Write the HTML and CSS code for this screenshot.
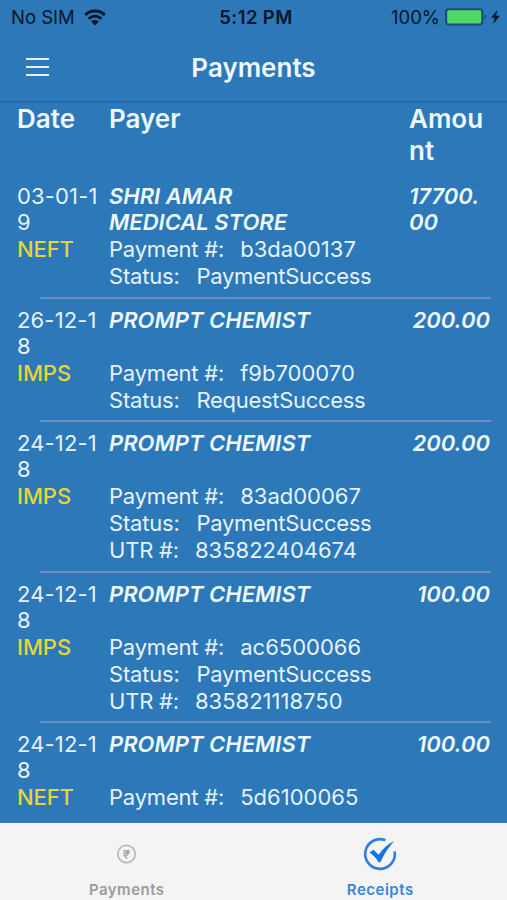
FILE: index.html
```html
<!DOCTYPE html>
<html lang="en">
<head>
    <meta charset="UTF-8">
    <meta name="viewport" content="width=device-width, initial-scale=1.0">
    <title>Payments</title>
    <link rel="stylesheet" href="styles.css">
</head>
<body>
    <div class="status-bar">
        <div class="carrier">
            <span>No SIM</span>
            <svg class="wifi" viewBox="0 0 22 17" width="22" height="17">
                <path d="M1.2 6C6.7 .8 15.3 .8 20.8 6" fill="none" stroke="#06152a" stroke-width="3"/>
                <path d="M4.6 9.8C8.5 6.3 13.5 6.3 17.4 9.8" fill="none" stroke="#06152a" stroke-width="2.8"/>
                <path d="M7.2 12.6C9.4 10.6 12.6 10.6 14.8 12.6L11 16.4Z" fill="#06152a"/>
            </svg>
        </div>
        <span class="clock">5:12 PM</span>
        <div class="battery">
            <span>100%</span>
            <svg viewBox="0 0 56 18" width="56" height="18">
                <rect x="0" y="0.2" width="38.4" height="17.4" rx="4" fill="#174f7d"/>
                <rect x="2.2" y="2.2" width="34" height="13.4" rx="1.5" fill="#4fd964"/>
                <path d="M39.6 6.5c2 1 2 4 0 5z" fill="#174f7d"/>
                <path d="M52.4 2L46 9.8H49.6L48 16L55 7.8H51Z" fill="#06152a"/>
            </svg>
        </div>
    </div>

    <header>
        <svg class="menu" viewBox="0 0 23 19" width="23" height="19">
            <path d="M0 1H23M0 9H23M0 17H23" stroke="#e4f2fd" stroke-width="1.9"/>
        </svg>
        <h1>Payments</h1>
    </header>

    <main>
        <div class="heading">
            <span>Date</span>
            <span>Payer</span>
            <span class="heading-amount">Amount</span>
        </div>

        <section class="payment">
            <div class="date">03-01-19</div>
            <div class="payer">SHRI AMAR MEDICAL STORE</div>
            <div class="amount wrapped">17700.<br>00</div>
            <div class="mode">NEFT</div>
            <div class="details">
                <p><span>Payment #:</span><span class="number">b3da00137</span></p>
                <p><span>Status:</span><span class="status">PaymentSuccess</span></p>
            </div>
        </section>

        <section class="payment">
            <div class="date">26-12-18</div>
            <div class="payer">PROMPT CHEMIST</div>
            <div class="amount">200.00</div>
            <div class="mode">IMPS</div>
            <div class="details">
                <p><span>Payment #:</span><span class="number">f9b700070</span></p>
                <p><span>Status:</span><span class="status">RequestSuccess</span></p>
            </div>
        </section>

        <section class="payment">
            <div class="date">24-12-18</div>
            <div class="payer">PROMPT CHEMIST</div>
            <div class="amount">200.00</div>
            <div class="mode">IMPS</div>
            <div class="details">
                <p><span>Payment #:</span><span class="number">83ad00067</span></p>
                <p><span>Status:</span><span class="status">PaymentSuccess</span></p>
                <p><span>UTR #:</span><span class="number">835822404674</span></p>
            </div>
        </section>

        <section class="payment">
            <div class="date">24-12-18</div>
            <div class="payer">PROMPT CHEMIST</div>
            <div class="amount">100.00</div>
            <div class="mode">IMPS</div>
            <div class="details">
                <p><span>Payment #:</span><span class="number">ac6500066</span></p>
                <p><span>Status:</span><span class="status">PaymentSuccess</span></p>
                <p><span>UTR #:</span><span class="number">835821118750</span></p>
            </div>
        </section>

        <section class="payment">
            <div class="date">24-12-18</div>
            <div class="payer">PROMPT CHEMIST</div>
            <div class="amount">100.00</div>
            <div class="mode">NEFT</div>
            <div class="details">
                <p><span>Payment #:</span><span class="number">5d6100065</span></p>
            </div>
        </section>
    </main>

    <nav>
        <a class="tab">
            <svg viewBox="0 0 36 36" width="36" height="36">
                <circle cx="17.5" cy="18" r="8.7" fill="none" stroke="#b9b9bb" stroke-width="1.8"/>
                <path d="M14.3 14.7H20.7M14.3 17H20.7M14.5 14.7H16.5C19.9 14.7 19.9 19.2 16.5 19.2H15.1L18.3 22.4" fill="none" stroke="#a6a6a8" stroke-width="1.4"/>
            </svg>
            <span>Payments</span>
        </a>
        <a class="tab active">
            <svg viewBox="0 0 36 36" width="36" height="36">
                <path d="M23.4 4.2A14.8 14.8 0 1 0 32.6 15.4" fill="none" stroke="#2f80dc" stroke-width="2.7"/>
                <path d="M7.6 16.6L11.4 13.8L16.6 18.8C20.4 13.2 25.4 8.4 32.2 5C26.8 11.2 22 18 18.4 26.2H16.6C14.2 22.4 11.2 19.2 7.6 16.6Z" fill="#1673e2"/>
            </svg>
            <span>Receipts</span>
        </a>
    </nav>
</body>
</html>
```
FILE: styles.css
```css
* {
    box-sizing: border-box;
}
body {
    margin: 0;
    height: 900px;
    display: flex;
    flex-direction: column;
    overflow: hidden;
    font-family: Inter, sans-serif;
    background-color: #2c78b9;
    color: #e4f3ff;
}
.status-bar {
    height: 34px;
    display: grid;
    grid-template-columns: 1fr auto 1fr;
    align-items: center;
    padding: 0 6px 0 11px;
    font-size: 18.5px;
    color: #06152a;
}
.carrier,
.battery {
    display: flex;
    align-items: center;
}
.carrier {
    gap: 9px;
}
.battery {
    justify-content: flex-end;
    gap: 5px;
}
.clock {
    font-weight: 600;
    letter-spacing: 0.4px;
}
header {
    height: 69px;
    display: grid;
    grid-template-columns: 1fr auto 1fr;
    align-items: center;
    padding: 0 26px;
    border-bottom: 2px solid #2469a8;
}
h1 {
    margin: 0;
    font-size: 26px;
    font-weight: 600;
    color: #f1f9ff;
}
main {
    flex: 1;
    min-height: 0;
    overflow: hidden;
}
.heading,
.payment {
    display: grid;
    grid-template-columns: 92px 300px 81px;
    padding-left: 17px;
}
.heading {
    height: 71px;
    font-size: 26px;
    font-weight: 600;
    line-height: 31px;
    color: #eef8ff;
}
.heading-amount {
    width: 76px;
    line-height: 32px;
    word-break: break-all;
}
.payment {
    grid-template-rows: 53px auto;
    padding-top: 9px;
    padding-bottom: 7.5px;
    font-size: 22px;
    line-height: 26px;
    position: relative;
}
.payment:not(:last-child)::after {
    content: "";
    position: absolute;
    left: 40px;
    right: 16px;
    bottom: -1px;
    height: 2px;
    background-color: #6f8cbd;
}
.date {
    width: 84px;
    letter-spacing: 0.15px;
    word-break: break-all;
}
.payer,
.amount {
    font-weight: 600;
    font-style: italic;
    color: #eef8ff;
}
.payer {
    width: 210px;
}
.amount {
    text-align: right;
}
.amount.wrapped {
    text-align: left;
}
.mode {
    line-height: 27px;
    font-weight: 500;
    letter-spacing: -0.1px;
    color: #e6d536;
}
.details p {
    margin: 0;
    display: flex;
    gap: 16px;
    line-height: 27px;
    letter-spacing: -0.2px;
}
.details .number {
    letter-spacing: 0;
}
.details .status {
    margin-left: 1px;
    letter-spacing: -0.3px;
}
nav {
    height: 77px;
    display: flex;
    background-color: #f4f4f5;
}
.tab {
    flex: 1;
    display: flex;
    flex-direction: column;
    align-items: center;
    padding-top: 13px;
    font-size: 15px;
    font-weight: 600;
    letter-spacing: 0.5px;
    color: #9c9c9e;
}
.tab span {
    margin-top: 8px;
}
.tab.active {
    color: #3685d7;
}
```
